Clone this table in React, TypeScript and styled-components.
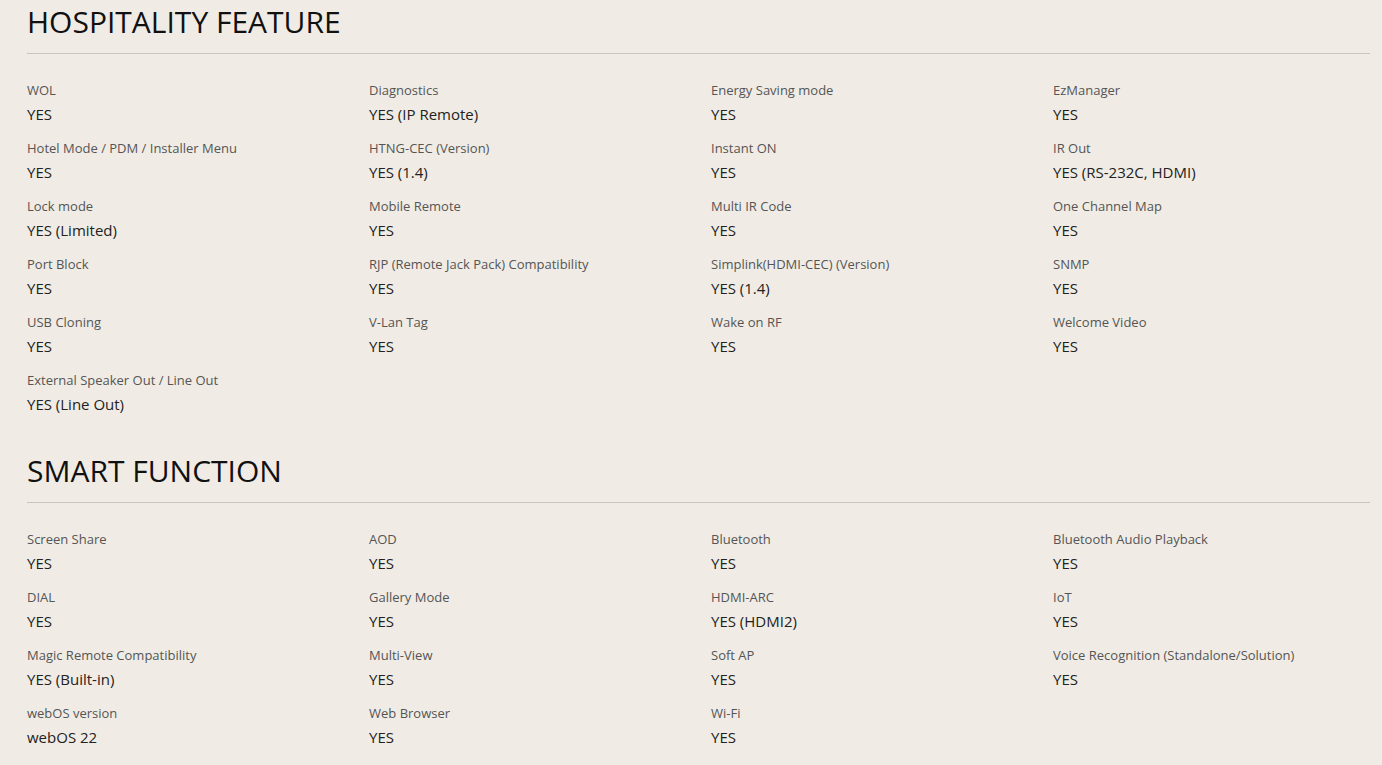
import React from 'react';
import styled, { createGlobalStyle } from 'styled-components';

type Spec = { label: string; value: string };

const hospitality: Spec[] = [
  { label: 'WOL', value: 'YES' },
  { label: 'Diagnostics', value: 'YES (IP Remote)' },
  { label: 'Energy Saving mode', value: 'YES' },
  { label: 'EzManager', value: 'YES' },
  { label: 'Hotel Mode / PDM / Installer Menu', value: 'YES' },
  { label: 'HTNG-CEC (Version)', value: 'YES (1.4)' },
  { label: 'Instant ON', value: 'YES' },
  { label: 'IR Out', value: 'YES (RS-232C, HDMI)' },
  { label: 'Lock mode', value: 'YES (Limited)' },
  { label: 'Mobile Remote', value: 'YES' },
  { label: 'Multi IR Code', value: 'YES' },
  { label: 'One Channel Map', value: 'YES' },
  { label: 'Port Block', value: 'YES' },
  { label: 'RJP (Remote Jack Pack) Compatibility', value: 'YES' },
  { label: 'Simplink(HDMI-CEC) (Version)', value: 'YES (1.4)' },
  { label: 'SNMP', value: 'YES' },
  { label: 'USB Cloning', value: 'YES' },
  { label: 'V-Lan Tag', value: 'YES' },
  { label: 'Wake on RF', value: 'YES' },
  { label: 'Welcome Video', value: 'YES' },
  { label: 'External Speaker Out / Line Out', value: 'YES (Line Out)' },
];

const smart: Spec[] = [
  { label: 'Screen Share', value: 'YES' },
  { label: 'AOD', value: 'YES' },
  { label: 'Bluetooth', value: 'YES' },
  { label: 'Bluetooth Audio Playback', value: 'YES' },
  { label: 'DIAL', value: 'YES' },
  { label: 'Gallery Mode', value: 'YES' },
  { label: 'HDMI-ARC', value: 'YES (HDMI2)' },
  { label: 'IoT', value: 'YES' },
  { label: 'Magic Remote Compatibility', value: 'YES (Built-in)' },
  { label: 'Multi-View', value: 'YES' },
  { label: 'Soft AP', value: 'YES' },
  { label: 'Voice Recognition (Standalone/Solution)', value: 'YES' },
  { label: 'webOS version', value: 'webOS 22' },
  { label: 'Web Browser', value: 'YES' },
  { label: 'Wi-Fi', value: 'YES' },
];

function SpecSection({ title, items }: { title: string; items: Spec[] }) {
  return (
    <Section>
      <Title>{title}</Title>
      <Grid>
        {items.map((item) => (
          <Item key={item.label}>
            <Label>{item.label}</Label>
            <Value>{item.value}</Value>
          </Item>
        ))}
      </Grid>
    </Section>
  );
}

export default function App() {
  return (
    <>
      <GlobalStyle />
      <Page>
        <SpecSection title="HOSPITALITY FEATURE" items={hospitality} />
        <SpecSection title="SMART FUNCTION" items={smart} />
      </Page>
    </>
  );
}

const GlobalStyle = createGlobalStyle`
  html, body {
    margin: 0;
    padding: 0;
    background: #f0ece5;
  }
  body {
    font-family: "Open Sans", "Noto Sans", sans-serif;
  }
`;

const Page = styled.div`
  padding: 0 12px 0 27px;
  display: flex;
  flex-direction: column;
  gap: 33px;
`;

const Section = styled.section``;

const Title = styled.h2`
  margin: 0;
  font-size: 30px;
  line-height: 44px;
  font-weight: 400;
  color: #111;
  padding-bottom: 9px;
  border-bottom: 1px solid #c9c6c1;
`;

const Grid = styled.div`
  display: grid;
  grid-template-columns: repeat(4, 317px);
  column-gap: 25px;
  row-gap: 12px;
  margin-top: 26px;
`;

const Item = styled.div`
  display: flex;
  flex-direction: column;
`;

const Label = styled.span`
  font-size: 13px;
  line-height: 20px;
  color: #555;
`;

const Value = styled.span`
  margin-top: 2px;
  font-size: 15px;
  line-height: 24px;
  color: #222;
`;
